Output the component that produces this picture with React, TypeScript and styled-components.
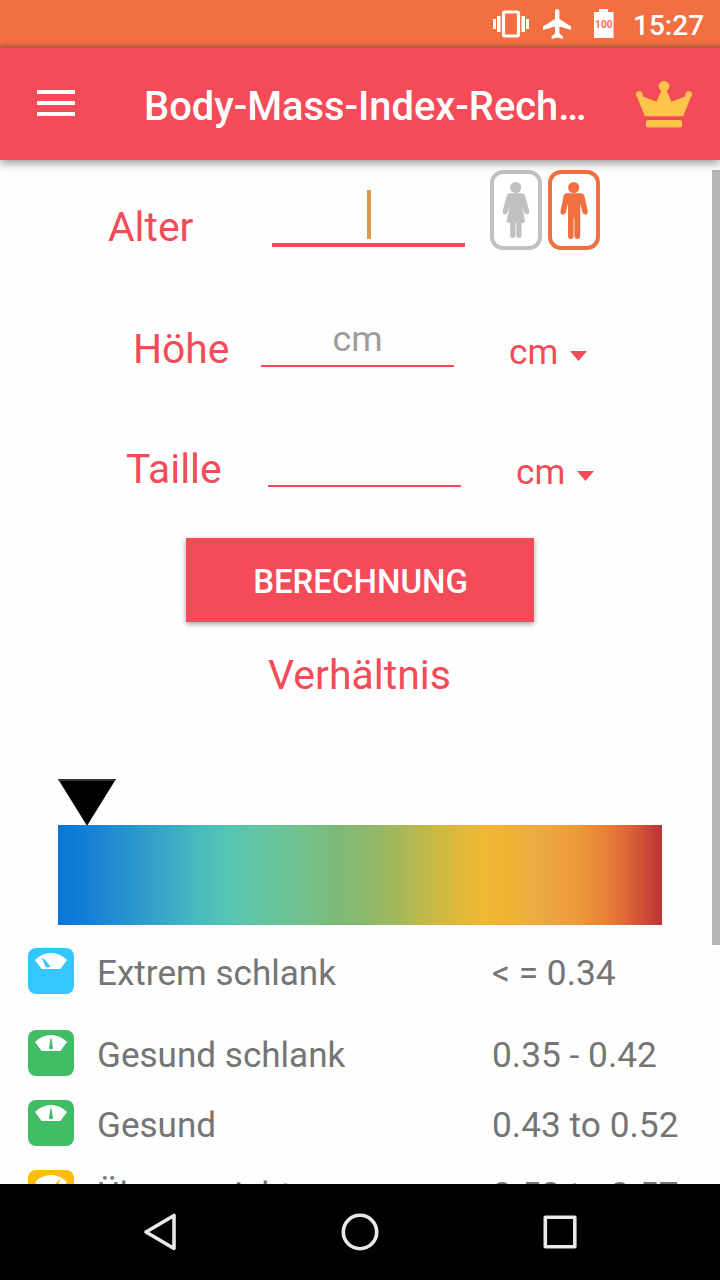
import React from "react";
import styled, { createGlobalStyle } from "styled-components";

const red = "#f34b58";
const orange = "#f26f42";

const GlobalStyle = createGlobalStyle`
  * { box-sizing: border-box; }
  body { margin: 0; background: #fff; font-family: Roboto, sans-serif; }
  svg { display: block; flex: none; }
`;

const Screen = styled.div`
  width: 720px;
  height: 1280px;
  display: flex;
  flex-direction: column;
  overflow: hidden;
  background: #fefefe;
`;

const StatusBar = styled.header`
  flex: none;
  height: 48px;
  display: flex;
  align-items: center;
  padding-left: 492px;
  color: #fff;
  background: linear-gradient(${orange} 42px, #c6603f 48px);
`;

const Clock = styled.span`
  margin-left: 17px;
  padding-top: 4px;
  font-size: 28px;
  line-height: 34px;
  font-weight: 500;
`;

const BatteryLabel = styled.text`
  font: 700 10px Roboto, sans-serif;
  letter-spacing: 0.2px;
  fill: ${orange};
`;

const AppBar = styled.div`
  flex: none;
  position: relative;
  z-index: 1;
  height: 112px;
  display: flex;
  align-items: center;
  padding: 0 28px 0 37px;
  background: ${red};
  box-shadow: 0 3px 9px rgba(0, 0, 0, 0.42);
`;

const MenuButton = styled.button`
  width: 38px;
  height: 26px;
  margin: 0 69px 2px 0;
  padding: 0;
  border: 0;
  background: none;
  display: flex;
  flex-direction: column;
  justify-content: space-between;
`;

const MenuLine = styled.span`
  width: 38px;
  height: 4px;
  background: #fff;
`;

const Title = styled.h1`
  flex: 1;
  margin: 0;
  padding-top: 5px;
  font-size: 39.85px;
  line-height: 48px;
  font-weight: 500;
  white-space: nowrap;
  color: #fff;
`;

const Content = styled.main`
  flex: 1;
  min-height: 0;
  display: flex;
  overflow: hidden;
`;

const Page = styled.div`
  width: 712px;
  height: 1024px;
  flex: none;
  overflow: hidden;
`;

const ScrollThumb = styled.div`
  width: 8px;
  height: 775px;
  margin-top: 10px;
  background: #b7b7b7;
`;

const FieldRow = styled.div<{ $indent: number; $height: number }>`
  display: flex;
  align-items: flex-end;
  height: ${(p) => p.$height}px;
  padding-left: ${(p) => p.$indent}px;
`;

const Label = styled.label<{ $width: number; $line: number }>`
  width: ${(p) => p.$width}px;
  font-size: 40.8px;
  line-height: ${(p) => p.$line}px;
  white-space: nowrap;
  color: ${red};
`;

const Field = styled.div<{ $active?: boolean }>`
  width: 193px;
  height: 60px;
  display: flex;
  justify-content: center;
  align-items: flex-end;
  padding-bottom: ${(p) => (p.$active ? 4 : 2)}px;
  margin-bottom: 3px;
  border-bottom: ${(p) => (p.$active ? 4 : 2)}px solid ${red};
  font-size: 35.8px;
  line-height: 48px;
  color: #9c9c9c;
`;

const Caret = styled.span`
  width: 4px;
  height: 49px;
  margin-left: 1px;
  background: #db9a4c;
`;

const Genders = styled.div`
  display: flex;
  gap: 6px;
  margin-left: 25px;
`;

const GenderBox = styled.button<{ $color: string }>`
  width: 52px;
  height: 80px;
  padding: 0;
  display: flex;
  justify-content: center;
  align-items: center;
  border: 4px solid ${(p) => p.$color};
  border-radius: 13px;
  background: #fff;
  color: ${(p) => p.$color};
`;

const Unit = styled.div`
  display: flex;
  align-items: center;
  gap: 12px;
  margin-left: 55px;
  font-size: 35.2px;
  line-height: 35px;
  color: ${red};
`;

const UnitArrow = styled.svg`
  margin-top: 7px;
`;

const Calculate = styled.button`
  display: block;
  width: 348px;
  height: 84px;
  margin: 48px 0 0 186px;
  padding: 4px 0 0 1px;
  border: 0;
  background: ${red};
  box-shadow: 0 2px 5px rgba(0, 0, 0, 0.38);
  font: 500 33px/40px Roboto, sans-serif;
  color: #fff;
`;

const Ratio = styled.h2`
  width: 719px;
  margin: 29px 0 0;
  text-align: center;
  font-size: 41px;
  line-height: 48px;
  font-weight: 400;
  color: ${red};
`;

const Scale = styled.section`
  margin: 80px 0 0 58px;
`;

const ScaleBar = styled.div`
  width: 604px;
  height: 100px;
  background: linear-gradient(
    90deg,
    #0b76d5 0,
    #147fd7 28px,
    #2490cf 64px,
    #3aa7c8 108px,
    #49b9bf 139px,
    #56c5b3 170px,
    #65c4a0 210px,
    #72c28f 242px,
    #7bba76 278px,
    #8ab96c 307px,
    #a6b85a 342px,
    #c7b945 375px,
    #e2b83a 404px,
    #f0b835 424px,
    #f0b335 448px,
    #ecaa43 482px,
    #ed9a3a 520px,
    #e78336 546px,
    #df6737 568px,
    #c94736 590px,
    #ba3433 604px
  );
`;

const Legend = styled.ul`
  list-style: none;
  margin: 23px 0 0;
  padding: 0;
`;

const LegendRow = styled.li<{ $gap: number }>`
  display: grid;
  grid-template-columns: 46px 372px auto;
  justify-content: start;
  column-gap: 23px;
  align-items: center;
  height: 46px;
  margin-bottom: ${(p) => p.$gap}px;
  padding-left: 28px;
  font-size: 35.1px;
  line-height: 40px;
  white-space: nowrap;
  color: #757575;
`;

const LegendText = styled.span`
  padding-top: 4px;
`;

const LegendRange = styled(LegendText)`
  font-size: 35.3px;
`;

const NavBar = styled.nav`
  flex: none;
  height: 96px;
  display: flex;
  justify-content: center;
  align-items: center;
  gap: 152px;
  background: #000;
`;

const GenderIcon = ({ female }: { female?: boolean }) => (
  <svg width="28" height="60" viewBox="0 0 28 60" fill="currentColor">
    <circle cx="13.700" cy="7.500" r="5.600" />
    {female ? (
      <path d="M8.500 13.200h10.500q3.500 0 4.300 3l4 14.800q.5 3-1.800 3.400-2.600.3-3.500-2.200L20.800 28 21 31 23 40.500q.3 2.500-3.500 2.800V55.500q0 2.500-2.600 2.500t-2.600-2.500V43.300h-.9V55.500q0 2.500-2.600 2.500t-2.600-2.500V43.300Q4.400 43 4.700 40.500L6.700 31 6.900 28 5.700 32.200q-.9 2.400-3.200 2.200-2.300-.4-1.900-3.400l4-14.800q.6-3 3.900-3z" />
    ) : (
      <path d="M6.800 13.200H20.800q2.900 0 3.700 3.200l3.300 14.600q.5 3-1.700 3.600-2.700.3-3.600-2.300L20.200 23.500V56q0 3-2.900 3T14.400 56V38.500h-.8V56q0 3-2.800 3T8 56V23.500L5.900 32.300Q5 34.900 2.300 34.600 0 34 .6 31L3.400 16.400q.7-3.200 3.400-3.200z" />
    )}
  </svg>
);

type NeedlePosition = "left" | "middle" | "right";

const needles: Record<NeedlePosition, string> = {
  left: "M13.500 9.300Q18 12 22.500 19L17.800 19.500z",
  middle: "M22.600 8h.8L25 18.500Q23 19.800 21 18.500z",
  right: "M32.500 9.300Q28 12 23.500 19L28.200 19.500z",
};

const ScaleIcon = ({ color, needle }: { color: string; needle: NeedlePosition }) => (
  <svg width="46" height="46" viewBox="0 0 46 46">
    <rect width="46" height="46" rx="8" fill={color} />
    <path d="M7 12Q14 5 23 5T39 12L32.300 21H13.700z" fill="#fff" />
    <path d={needles[needle]} fill={color} />
  </svg>
);

const legend: { name: string; range: string; color: string; needle: NeedlePosition; gap: number }[] = [
  { name: "Extrem schlank", range: "< = 0.34", color: "#34c7ff", needle: "left", gap: 36 },
  { name: "Gesund schlank", range: "0.35 - 0.42", color: "#41bd65", needle: "middle", gap: 24 },
  { name: "Gesund", range: "0.43 to 0.52", color: "#41bd65", needle: "middle", gap: 24 },
  { name: "Übergewicht", range: "0.53 to 0.57", color: "#fdbd0b", needle: "right", gap: 24 },
];

const UnitSelect = () => (
  <Unit>
    cm
    <UnitArrow width="17" height="10" viewBox="0 0 17 10">
      <path d="M0 0h17L8.500 10z" fill={red} />
    </UnitArrow>
  </Unit>
);

export default function App() {
  return (
    <>
      <GlobalStyle />
      <Screen>
        <StatusBar>
          <svg width="100" height="48" viewBox="492 0 100 48" fill="#fff">
            <path d="M493 19h3v10h-3zM497 16h3.500v16H497zM521.500 16h3.500v16h-3.500zM526 19h3v10h-3z" />
            <rect x="503.500" y="12" width="15" height="24" rx="1.500" fill="none" stroke="#fff" strokeWidth="3.200" />
            <path d="M555 11q0-2 2.200-2t2.200 2v8L571 26.500v3.500l-11.600-3.500v7l3.400 2.700V39l-5.600-1.600-5.600 1.600v-2.800l3.400-2.700v-7L543 30v-3.500L555 19z" />
          </svg>
          <svg width="24" height="48" viewBox="592 0 24 48">
            <path d="M599 9h9v3h5.500v26H594V12h5z" fill="#fff" />
            <BatteryLabel x="595" y="27.500">100</BatteryLabel>
          </svg>
          <Clock>15:27</Clock>
        </StatusBar>
        <AppBar>
          <MenuButton aria-label="Menu">
            <MenuLine />
            <MenuLine />
            <MenuLine />
          </MenuButton>
          <Title>Body-Mass-Index-Rech…</Title>
          <svg width="56" height="48" viewBox="0 0 56 48" fill="#ffc54a">
            <circle cx="28" cy="6.300" r="5.300" />
            <circle cx="3.200" cy="14.500" r="3.200" />
            <circle cx="52.800" cy="14.500" r="3.200" />
            <path d="M1 16.500L6 14.500 7.500 16.700 20.600 21.700 25 11.500V9h6v2.500L35.400 21.700 48.500 16.700 50 14.500 55 16.500 47.200 36.300H8.800z" />
            <rect x="10" y="40" width="36" height="7.500" rx="2" />
          </svg>
        </AppBar>
        <Content>
          <Page>
            <FieldRow $indent={108} $height={90}>
              <Label $width={164} $line={46}>Alter</Label>
              <Field $active>
                <Caret />
              </Field>
              <Genders>
                <GenderBox $color="#c1c1c1" aria-label="Frau">
                  <GenderIcon female />
                </GenderBox>
                <GenderBox $color={orange} aria-label="Mann">
                  <GenderIcon />
                </GenderBox>
              </Genders>
            </FieldRow>
            <FieldRow $indent={133} $height={120}>
              <Label $width={128} $line={42}>Höhe</Label>
              <Field>cm</Field>
              <UnitSelect />
            </FieldRow>
            <FieldRow $indent={126} $height={120}>
              <Label $width={142} $line={42}>Taille</Label>
              <Field />
              <UnitSelect />
            </FieldRow>
            <Calculate>BERECHNUNG</Calculate>
            <Ratio>Verhältnis</Ratio>
            <Scale>
              <svg width="58" height="46" viewBox="0 0 58 46">
                <path d="M0 0H58L29.500 46H28.500z" />
                <path d="M0 0H58L57 2H1z" fill="#333" />
              </svg>
              <ScaleBar />
            </Scale>
            <Legend>
              {legend.map((item) => (
                <LegendRow key={item.name} $gap={item.gap}>
                  <ScaleIcon color={item.color} needle={item.needle} />
                  <LegendText>{item.name}</LegendText>
                  <LegendRange>{item.range}</LegendRange>
                </LegendRow>
              ))}
            </Legend>
          </Page>
          <ScrollThumb />
        </Content>
        <NavBar>
          <svg width="48" height="48" viewBox="0 0 48 48" fill="none" stroke="#e8e8e8" strokeWidth="3.600" strokeLinejoin="round">
            <path d="M38 7.500V40.500L10 24z" />
          </svg>
          <svg width="48" height="48" viewBox="0 0 48 48" fill="none" stroke="#e8e8e8" strokeWidth="3.600">
            <circle cx="24" cy="24" r="16.700" />
          </svg>
          <svg width="48" height="48" viewBox="0 0 48 48" fill="none" stroke="#e8e8e8" strokeWidth="3.600" strokeLinejoin="round">
            <rect x="9.300" y="9.300" width="29.500" height="29.500" />
          </svg>
        </NavBar>
      </Screen>
    </>
  );
}
